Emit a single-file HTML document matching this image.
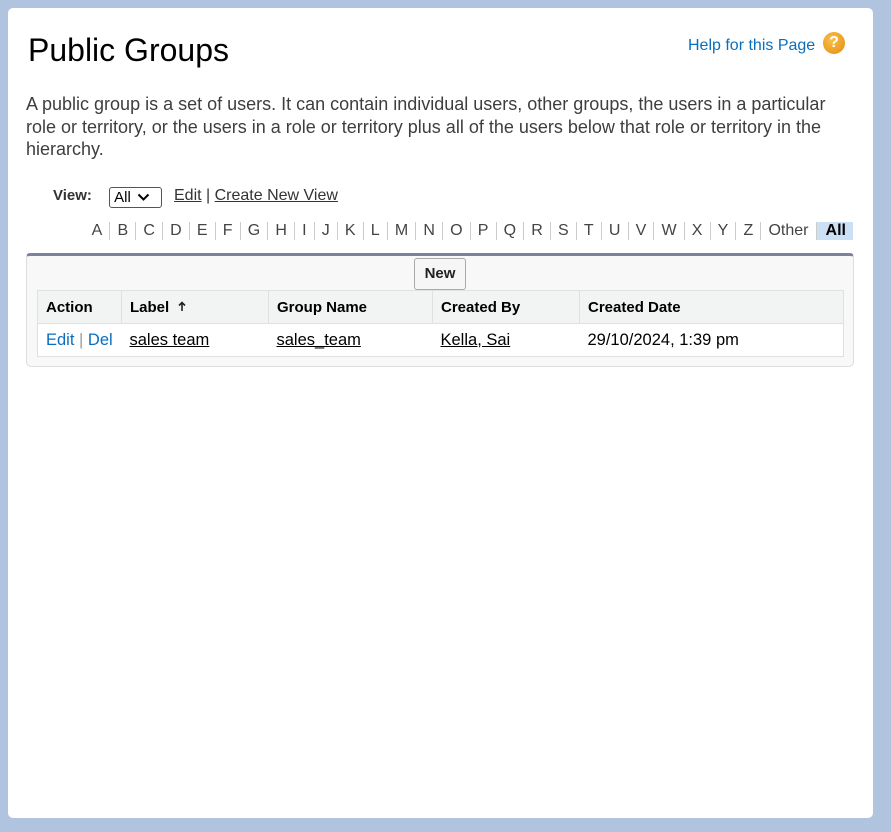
<!DOCTYPE html>
<html><head><style>
body{margin:0;width:891px;height:832px;background:#b0c4df;font-family:"Liberation Sans",Arial,sans-serif;position:relative;overflow:hidden}
.card{position:absolute;left:8px;top:8px;width:865px;height:810px;background:#fff;border-radius:5px}
.a{position:absolute}
h1{position:absolute;left:20px;top:24px;margin:0;font-size:32px;font-weight:normal;color:#000}
.help{left:680px;top:29px;color:#0b6ebd;font-size:16px}
.q{left:815px;top:24px;width:22px;height:22px;border-radius:50%;background:radial-gradient(circle at 40% 35%,#f8c04a,#e48a0d);color:#fff;font-weight:bold;font-size:16px;text-align:center;line-height:22px}
.desc{left:18px;top:85px;width:830px;font-size:18px;line-height:22.5px;color:#3e3e3c}
.view{left:45px;top:179px;font-size:15px;font-weight:bold;color:#333}
.sel{left:101px;top:179px;width:51px;height:19px;border:1px solid #555;border-radius:3px;font-size:15px;line-height:20px}
.lk{color:#333;text-decoration:underline;font-size:16px}
.alpha{right:20px;top:214px;display:flex;font-size:16px;color:#444;height:18px;line-height:18px}
.alpha span{padding:0 7.1px;border-left:1px solid #ccc}
.alpha span:first-child{border-left:none}
.alpha .all{background:#cce0f5;font-weight:bold;color:#000;padding:0 7px 0 9px}
.box{left:18px;top:245px;width:828px;height:114px;border:1px solid #ddd;border-top:3px solid #7a82a0;border-radius:4px 4px 5px 5px;background:#f8f8f8;box-sizing:border-box}
.new{left:406px;top:250px;width:52px;height:32px;border:1px solid #aaa;border-radius:3px;background:#f6f6f6;font-weight:bold;font-size:15px;text-align:center;line-height:30px;color:#222;box-sizing:border-box}
table{position:absolute;left:29px;top:282px;width:807px;border-collapse:collapse;font-size:16.5px}
th{background:#f2f3f3;text-align:left;font-weight:bold;height:32px;padding:0 8px;border:1px solid #e0e0e0;font-size:15px;vertical-align:middle}
td{background:#fff;height:32px;padding:0 8px;border-top:1px solid #e0e0e0;border-bottom:1px solid #e0e0e0}
td a{color:#000;text-decoration:underline}
.bl{color:#0b6ebd}
</style></head><body>
<div class="card">
<h1>Public Groups</h1>
<div class="a help">Help for this Page</div>
<div class="a q">?</div>
<div class="a desc">A public group is a set of users. It can contain individual users, other groups, the users in a particular role or territory, or the users in a role or territory plus all of the users below that role or territory in the hierarchy.</div>
<div class="a view">View:</div>
<div class="a sel">&nbsp;All <svg width="13" height="9" viewBox="0 0 13 9" style="margin-left:2px"><path d="M1.5 1.5L6.5 6.5L11.5 1.5" stroke="#000" stroke-width="2" fill="none"/></svg></div>
<div class="a" style="left:166px;top:179px;font-size:16px;color:#333"><span class="lk">Edit</span> | <span class="lk">Create New View</span></div>
<div class="a alpha"><span>A</span><span>B</span><span>C</span><span>D</span><span>E</span><span>F</span><span>G</span><span>H</span><span>I</span><span>J</span><span>K</span><span>L</span><span>M</span><span>N</span><span>O</span><span>P</span><span>Q</span><span>R</span><span>S</span><span>T</span><span>U</span><span>V</span><span>W</span><span>X</span><span>Y</span><span>Z</span><span>Other</span><span class="all">All</span></div>
<div class="a box"></div>
<div class="a new">New</div>
<table>
<tr><th style="width:67px">Action</th><th style="width:130px">Label &nbsp;<svg width="8" height="11" viewBox="0 0 8 11" style="vertical-align:0"><path d="M4 10V2M1 4.5L4 1.5L7 4.5" stroke="#222" stroke-width="1.6" fill="none"/></svg></th><th style="width:147px">Group Name</th><th style="width:130px">Created By</th><th>Created Date</th></tr>
<tr><td style="border-left:1px solid #e0e0e0"><span class="bl">Edit</span> <span style="color:#999">|</span> <span class="bl">Del</span></td><td><a>sales team</a></td><td><a>sales_team</a></td><td><a>Kella, Sai</a></td><td style="border-right:1px solid #e0e0e0">29/10/2024, 1:39 pm</td></tr>
</table>
</div>
</body></html>
